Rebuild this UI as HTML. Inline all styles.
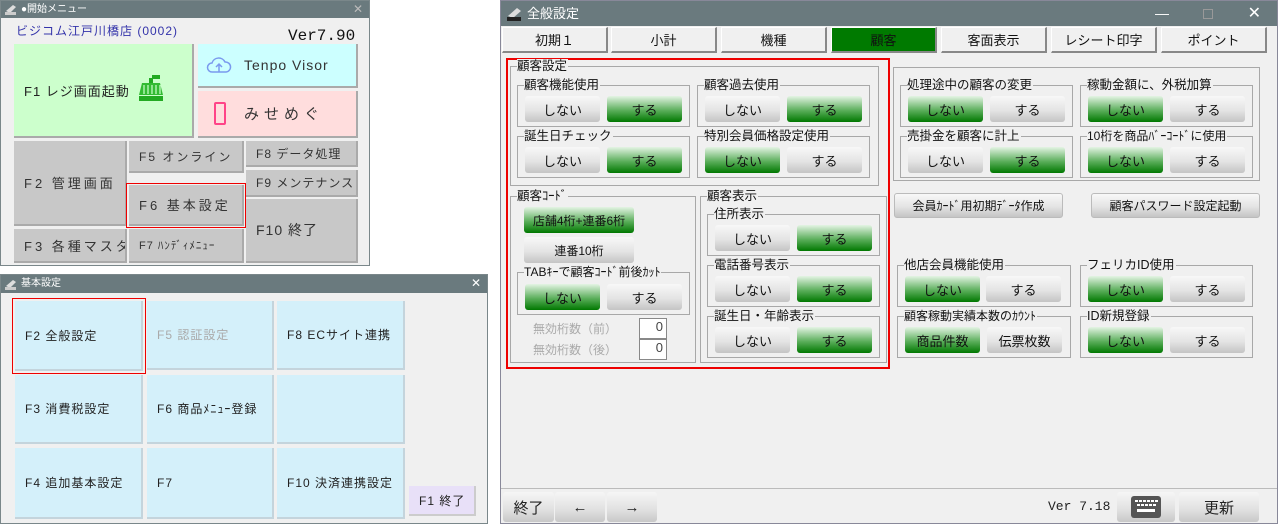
<!DOCTYPE html>
<html><head><meta charset="utf-8"><style>
*{margin:0;padding:0;box-sizing:border-box}
body{width:1278px;height:524px;background:#fff;position:relative;overflow:hidden;font-family:"Liberation Sans","Noto Sans CJK JP",sans-serif;}
.a{position:absolute}
.win{position:absolute;background:#f0f0f0;border:1px solid #7a878a}
.tb{position:absolute;left:0;top:0;right:0;background:#6a7a7e;color:#fff;font-size:10px;padding-left:20px;line-height:17px}
.tile{position:absolute;display:flex;align-items:center;font-size:13px;color:#333;font-weight:normal;border-right:2px solid #aaa;border-bottom:2px solid #aaa;padding-left:10px;letter-spacing:1px;white-space:nowrap;overflow:hidden}
.g{background:#c8c8c8}
.c{background:#d4f0fa;border-right:2px solid #c4d4dc;border-bottom:2px solid #c4d4dc;font-weight:normal;color:#222;font-size:12px;padding-left:10px}
.grp{position:absolute;border:1px solid #a8a8a8}
.lab{position:absolute;top:-8px;left:6px;background:#f0f0f0;font-size:12.5px;line-height:14px;color:#111;padding-right:1px;white-space:nowrap}
.b{position:absolute;display:flex;align-items:center;justify-content:center;font-size:13px;color:#111;border-radius:3px;background:linear-gradient(#f8f8f8,#e4e4e4 55%,#c4c4c4);white-space:nowrap}
.on{background:linear-gradient(#e4f4e4,#5caf5c 55%,#007800);}
.tab{position:absolute;top:27px;height:26px;width:106px;display:flex;align-items:center;justify-content:center;font-size:13px;background:#f0f0f0;border:1px solid #fff;border-right:2px solid #888;border-bottom:2px solid #888;color:#111}
.bb{position:absolute;top:492px;height:30px;display:flex;align-items:center;justify-content:center;font-size:15px;background:linear-gradient(#f6f6f6,#e0e0e0 60%,#c8c8c8);border-radius:3px;color:#222}
</style></head><body>

<!-- Window 1 -->
<div class="win" style="left:0;top:0;width:370px;height:266px">
<div class="tb" style="height:17px">●開始メニュー<span style="position:absolute;right:6px;color:#bbb;font-size:12px">✕</span></div>
<svg class="a" style="left:3px;top:2px" width="14" height="13"><path d="M2 8 L9 2 L12 4 L6 10Z" fill="#ddd"/><rect x="1" y="9" width="11" height="3" fill="#ccc"/></svg>
<div class="a" style="left:15px;top:21px;font-size:12px;color:#3333aa;letter-spacing:1px">ビジコム江戸川橋店 (0002)</div>
<div class="a" style="left:287px;top:26px;font-size:16px;font-family:'Liberation Mono',monospace;color:#111">Ver7.90</div>
<div class="tile" style="left:13px;top:43px;width:180px;height:94px;background:#ccffcc;color:#222">F1 レジ画面起動</div>
<svg class="a" style="left:137px;top:74px" width="26" height="30"><rect x="14" y="0" width="8" height="4" fill="#2a2"/><rect x="11" y="3" width="4" height="5" fill="#2a2"/><path d="M4 8 H22 L25 20 H1Z" fill="#3b3"/><path d="M6 10v9M10 10v9M14 10v9M18 10v9M22 10v9" stroke="#cfc" stroke-width="1.2"/><rect x="1" y="21" width="24" height="5" fill="#2a2"/></svg>
<div class="tile" style="left:197px;top:43px;width:160px;height:44px;background:#ccffff;padding-left:46px;font-size:14px">Tenpo Visor</div>
<svg class="a" style="left:205px;top:54px" width="26" height="20"><path d="M6 17 H20 A5 5 0 0 0 19 7 A7 7 0 0 0 6 8 A4.5 4.5 0 0 0 6 17Z" fill="none" stroke="#7a9aee" stroke-width="1.5"/><path d="M13 17V9M10 12l3-3 3 3" stroke="#7a9aee" stroke-width="1.5" fill="none"/></svg>
<div class="tile" style="left:197px;top:90px;width:160px;height:47px;background:#fdd;padding-left:46px;font-size:15px;letter-spacing:5px">みせめぐ</div>
<div class="a" style="left:213px;top:101px;width:12px;height:23px;border:2px solid #f48;border-radius:2px"></div>
<div class="tile g" style="left:13px;top:140px;width:113px;height:85px;letter-spacing:3px">F2 管理画面</div>
<div class="tile g" style="left:128px;top:140px;width:115px;height:32px;letter-spacing:2px;font-size:12px">F5 オンライン</div>
<div class="tile g" style="left:245px;top:140px;width:112px;height:26px;font-size:12px">F8 データ処理</div>
<div class="tile g" style="left:245px;top:169px;width:112px;height:27px;font-size:12px">F9 メンテナンス</div>
<div class="tile g" style="left:128px;top:184px;width:115px;height:41px;letter-spacing:3px">F6 基本設定</div>
<div class="a" style="left:125px;top:182px;width:120px;height:45px;border:1px solid #e00"></div>
<div class="tile g" style="left:245px;top:198px;width:112px;height:64px;font-size:14px">F10 終了</div>
<div class="tile g" style="left:13px;top:228px;width:113px;height:34px;letter-spacing:3px">F3 各種マスタ</div>
<div class="tile g" style="left:128px;top:228px;width:115px;height:34px;font-size:11px">F7 ﾊﾝﾃﾞｨﾒﾆｭｰ</div>
</div>

<!-- Window 2 -->
<div class="win" style="left:0;top:274px;width:488px;height:250px">
<div class="tb" style="height:18px">基本設定<span style="position:absolute;right:6px;font-size:12px">✕</span></div>
<svg class="a" style="left:3px;top:3px" width="14" height="13"><path d="M2 8 L9 2 L12 4 L6 10Z" fill="#ddd"/><rect x="1" y="9" width="11" height="3" fill="#ccc"/></svg>
</div>
<div class="tile c" style="left:15px;top:301px;width:128px;height:70px">F2 全般設定</div>
<div class="a" style="left:12px;top:298px;width:134px;height:76px;border:1px solid #e00"></div>
<div class="tile c" style="left:147px;top:301px;width:127px;height:69px;color:#aaa">F5 認証設定</div>
<div class="tile c" style="left:277px;top:301px;width:128px;height:69px">F8 ECサイト連携</div>
<div class="tile c" style="left:15px;top:375px;width:128px;height:69px">F3 消費税設定</div>
<div class="tile c" style="left:147px;top:375px;width:127px;height:69px">F6 商品ﾒﾆｭｰ登録</div>
<div class="tile c" style="left:277px;top:375px;width:128px;height:69px"></div>
<div class="tile c" style="left:15px;top:448px;width:128px;height:71px">F4 追加基本設定</div>
<div class="tile c" style="left:147px;top:448px;width:127px;height:71px">F7</div>
<div class="tile c" style="left:277px;top:448px;width:128px;height:71px">F10 決済連携設定</div>
<div class="tile c" style="left:409px;top:486px;width:67px;height:30px;background:#e8e0f8;border-color:#ccc">F1 終了</div>

<!-- Window 3 -->
<div class="win" style="left:500px;top:0;width:778px;height:524px;border-color:#889">
<div class="tb" style="height:25px;font-size:13px;line-height:25px;padding-left:26px">全般設定
<span style="position:absolute;right:108px;font-size:14px">—</span>
<span style="position:absolute;right:64px;width:10px;height:10px;top:8px;border:1px solid #999"></span>
<span style="position:absolute;right:16px;font-size:16px">✕</span></div>
<svg class="a" style="left:5px;top:5px" width="18" height="16"><path d="M2 10 L11 2 L15 5 L7 12Z" fill="#ddd"/><rect x="1" y="11" width="14" height="4" fill="#222"/></svg>
</div>
<div class="tab" style="left:502px">初期１</div>
<div class="tab" style="left:611px">小計</div>
<div class="tab" style="left:721px">機種</div>
<div class="tab" style="left:831px;background:#007a00;color:#111">顧客</div>
<div class="tab" style="left:941px">客面表示</div>
<div class="tab" style="left:1051px">レシート印字</div>
<div class="tab" style="left:1161px">ポイント</div>

<div class="a" style="left:506px;top:58px;width:384px;height:311px;border:2px solid #e00"></div>

<div class="grp" style="left:510px;top:66px;width:369px;height:120px"><div class="lab">顧客設定</div></div>
<div class="grp" style="left:517px;top:85px;width:173px;height:42px"><div class="lab">顧客機能使用</div></div>
<div class="b" style="left:525px;top:96px;width:75px;height:26px">しない</div>
<div class="b on" style="left:607px;top:96px;width:75px;height:26px">する</div>
<div class="grp" style="left:697px;top:85px;width:173px;height:42px"><div class="lab">顧客過去使用</div></div>
<div class="b" style="left:705px;top:96px;width:75px;height:26px">しない</div>
<div class="b on" style="left:787px;top:96px;width:75px;height:26px">する</div>
<div class="grp" style="left:517px;top:136px;width:173px;height:42px"><div class="lab">誕生日チェック</div></div>
<div class="b" style="left:525px;top:147px;width:75px;height:26px">しない</div>
<div class="b on" style="left:607px;top:147px;width:75px;height:26px">する</div>
<div class="grp" style="left:697px;top:136px;width:173px;height:42px"><div class="lab">特別会員価格設定使用</div></div>
<div class="b on" style="left:705px;top:147px;width:75px;height:26px">しない</div>
<div class="b" style="left:787px;top:147px;width:75px;height:26px">する</div>

<div class="grp" style="left:510px;top:196px;width:186px;height:167px"><div class="lab">顧客ｺｰﾄﾞ</div></div>
<div class="b on" style="left:524px;top:207px;width:110px;height:26px;font-size:12px">店舗4桁+連番6桁</div>
<div class="b" style="left:524px;top:237px;width:110px;height:26px;font-size:12px">連番10桁</div>
<div class="grp" style="left:517px;top:272px;width:173px;height:43px"><div class="lab" style="font-size:12px">TABｷｰで顧客ｺｰﾄﾞ前後ｶｯﾄ</div></div>
<div class="b on" style="left:525px;top:284px;width:75px;height:26px">しない</div>
<div class="b" style="left:607px;top:284px;width:75px;height:26px">する</div>
<div class="a" style="left:533px;top:320px;font-size:12px;color:#aaa">無効桁数（前）</div>
<div class="a" style="left:533px;top:341px;font-size:12px;color:#aaa">無効桁数（後）</div>
<div class="a" style="left:639px;top:318px;width:28px;height:21px;background:#fff;border:1px solid #888;text-align:right;padding-right:3px;font-size:13px;color:#444">0</div>
<div class="a" style="left:639px;top:339px;width:28px;height:21px;background:#fff;border:1px solid #888;text-align:right;padding-right:3px;font-size:13px;color:#444">0</div>

<div class="grp" style="left:700px;top:196px;width:187px;height:167px"><div class="lab">顧客表示</div></div>
<div class="grp" style="left:707px;top:214px;width:173px;height:42px"><div class="lab">住所表示</div></div>
<div class="b" style="left:715px;top:225px;width:75px;height:26px">しない</div>
<div class="b on" style="left:797px;top:225px;width:75px;height:26px">する</div>
<div class="grp" style="left:707px;top:265px;width:173px;height:42px"><div class="lab">電話番号表示</div></div>
<div class="b" style="left:715px;top:276px;width:75px;height:26px">しない</div>
<div class="b on" style="left:797px;top:276px;width:75px;height:26px">する</div>
<div class="grp" style="left:707px;top:316px;width:173px;height:42px"><div class="lab">誕生日・年齢表示</div></div>
<div class="b" style="left:715px;top:327px;width:75px;height:26px">しない</div>
<div class="b on" style="left:797px;top:327px;width:75px;height:26px">する</div>

<div class="grp" style="left:893px;top:67px;width:367px;height:114px"></div>
<div class="grp" style="left:900px;top:85px;width:173px;height:42px"><div class="lab">処理途中の顧客の変更</div></div>
<div class="b on" style="left:908px;top:96px;width:75px;height:26px">しない</div>
<div class="b" style="left:990px;top:96px;width:75px;height:26px">する</div>
<div class="grp" style="left:1080px;top:85px;width:173px;height:42px"><div class="lab">稼動金額に、外税加算</div></div>
<div class="b on" style="left:1088px;top:96px;width:75px;height:26px">しない</div>
<div class="b" style="left:1170px;top:96px;width:75px;height:26px">する</div>
<div class="grp" style="left:900px;top:136px;width:173px;height:42px"><div class="lab">売掛金を顧客に計上</div></div>
<div class="b" style="left:908px;top:147px;width:75px;height:26px">しない</div>
<div class="b on" style="left:990px;top:147px;width:75px;height:26px">する</div>
<div class="grp" style="left:1080px;top:136px;width:173px;height:42px"><div class="lab" style="font-size:12px">10桁を商品ﾊﾞｰｺｰﾄﾞに使用</div></div>
<div class="b on" style="left:1088px;top:147px;width:75px;height:26px">しない</div>
<div class="b" style="left:1170px;top:147px;width:75px;height:26px">する</div>
<div class="b" style="left:894px;top:193px;width:169px;height:25px;font-size:12px;border:1px solid #bbb">会員ｶｰﾄﾞ用初期ﾃﾞｰﾀ作成</div>
<div class="b" style="left:1091px;top:193px;width:169px;height:25px;font-size:12px;border:1px solid #bbb">顧客パスワード設定起動</div>

<div class="grp" style="left:897px;top:265px;width:174px;height:42px"><div class="lab">他店会員機能使用</div></div>
<div class="b on" style="left:905px;top:276px;width:75px;height:26px">しない</div>
<div class="b" style="left:986px;top:276px;width:75px;height:26px">する</div>
<div class="grp" style="left:1080px;top:265px;width:173px;height:42px"><div class="lab">フェリカID使用</div></div>
<div class="b on" style="left:1088px;top:276px;width:75px;height:26px">しない</div>
<div class="b" style="left:1170px;top:276px;width:75px;height:26px">する</div>
<div class="grp" style="left:897px;top:316px;width:174px;height:42px"><div class="lab" style="font-size:12px">顧客稼動実績本数のｶｳﾝﾄ</div></div>
<div class="b on" style="left:905px;top:327px;width:75px;height:26px">商品件数</div>
<div class="b" style="left:987px;top:327px;width:75px;height:26px">伝票枚数</div>
<div class="grp" style="left:1080px;top:316px;width:173px;height:42px"><div class="lab">ID新規登録</div></div>
<div class="b on" style="left:1088px;top:327px;width:75px;height:26px">しない</div>
<div class="b" style="left:1170px;top:327px;width:75px;height:26px">する</div>

<div class="a" style="left:501px;top:488px;width:776px;height:1px;background:#bbb"></div>
<div class="bb" style="left:503px;width:51px">終了</div>
<div class="bb" style="left:555px;width:50px">←</div>
<div class="bb" style="left:607px;width:50px">→</div>
<div class="a" style="left:1048px;top:499px;font-size:13px;font-family:'Liberation Mono',monospace;color:#222">Ver 7.18</div>
<div class="bb" style="left:1117px;width:58px"><svg width="30" height="22"><rect width="30" height="22" rx="3" fill="#555"/><g fill="#fff"><rect x="4" y="4" width="3" height="2"/><rect x="8" y="4" width="3" height="2"/><rect x="12" y="4" width="3" height="2"/><rect x="16" y="4" width="3" height="2"/><rect x="20" y="4" width="3" height="2"/><rect x="24" y="4" width="3" height="2"/><rect x="6" y="8" width="3" height="2"/><rect x="10" y="8" width="3" height="2"/><rect x="14" y="8" width="3" height="2"/><rect x="18" y="8" width="3" height="2"/><rect x="22" y="8" width="3" height="2"/><rect x="6" y="13" width="18" height="3"/></g></svg></div>
<div class="bb" style="left:1179px;width:80px">更新</div>
</body></html>
